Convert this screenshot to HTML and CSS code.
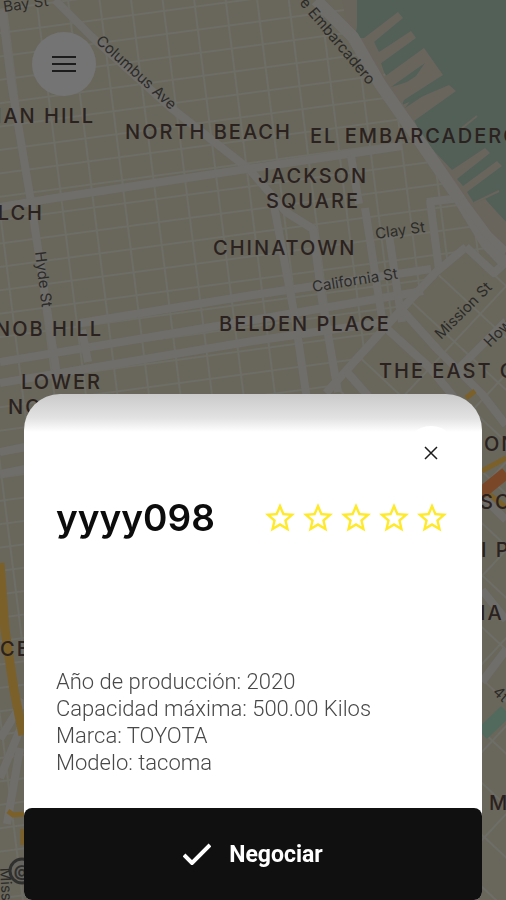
FILE: index.html
```html
<!DOCTYPE html>
<html lang="es">
<head>
<meta charset="utf-8">
<meta name="viewport" content="width=device-width, initial-scale=1">
<title>Negociar</title>
<link rel="stylesheet" href="styles.css">
</head>
<body>
<svg class="map" viewBox="0 0 506 900" preserveAspectRatio="xMidYMin slice" role="img" aria-label="San Francisco">
  <defs>
    <pattern id="blocks" width="31" height="23" patternUnits="userSpaceOnUse" patternTransform="matrix(1 -0.135 0.125 1 5 8)">
      <path d="M0 0H31M0 0V23" class="street"/>
    </pattern>
    <pattern id="soma" width="38" height="60" patternUnits="userSpaceOnUse" patternTransform="translate(435 273) rotate(-47)">
      <path d="M0 0H38M0 0V60" class="street street-wide"/>
    </pattern>
  </defs>
  <rect width="506" height="900" class="land"/>
  <rect width="506" height="900" fill="url(#blocks)"/>
  <path class="land" d="M466 247L326 393L200 530V900H506V266Z"/>
  <path fill="url(#soma)" d="M466 247L326 393L200 530V900H506V266Z"/>

  <!-- bay and piers -->
  <path class="water" d="M357 0V25L355 38L366 38L374 42L380 60L384 72L400 100L415 122L422 137L433 150L450 172L462 187L473 204L485 199L497 214L506 222V0Z"/>
  <path class="pier" d="M342 0H357V25L355 38L364 38L398 12L403 18L374 42L379 52L411 31L416 38L380 64L384 77L424 48L443 75L404 100L402 105L449 85L456 91L414 121L422 136L433 150L452 170L485 148L490 153L457 179L463 186L497 161L502 166L467 192L474 203L485 199L506 222V262L460 204L410 130L380 84L350 38Z"/>
  <path class="water" d="M391 87L425 63L416 76L407 82L401 84ZM411 100L426 94L405 108Z"/>
  <path class="pier-line" d="M462 128L477 116M474 203L499 191"/>

  <!-- avenues -->
  <g class="road">
    <path d="M2 10L12 88L31 202L58 382"/>
    <path d="M55 0L92 37L170 107L250 170L286 212L313 229L322 300L338 392"/>
    <path d="M0 207L55 198L240 170L402 146"/>
    <path d="M80 323L253 295L431 269"/>
    <path d="M0 362L253 320L423 291"/>
    <path d="M0 383L253 341L385 322"/>
    <path d="M0 452L30 446M0 474L30 468"/>
    <path d="M273 200L295 318L307 400"/>
    <path d="M365 208L382 318M389 235L402 322"/>
    <path d="M430 200L439 270M427 202L460 198"/>
    <path d="M351 156L359 204M82 330L88 362"/>
    <path d="M466 247L435 273L390 322L326 393"/>
    <path d="M385 327L430 368L453 396"/>
    <path d="M402 310L439 351L482 394L506 425"/>
    <path d="M466 247L494 273L506 262"/>
    <path d="M460 367L506 321M346 371L369 397"/>
    <path d="M482 590L506 620M482 682L506 650M476 490L506 520"/>
    <path d="M0 739L24 700M0 778L24 720M7 824L20 748"/>
  </g>
  <path class="road road-main" d="M316 0L353 37L380 84L410 127L460 200L486 243L506 264"/>
  <path class="road" d="M462 200L488 235L506 252"/>

  <path class="amber" d="M0 563L5 630L14 690L23 735"/>
  <path class="amber amber-thin" d="M8 811L13 815L24 814M23 829V845M466 398L475 391M482 471L506 458M482 489L506 507"/>
  <path class="freeway" d="M480 494L506 473"/>
  <path class="creek" d="M482 734L506 711"/>

  <g class="district">
    <text x="95" y="123" text-anchor="end">IAN HILL</text>
    <text x="125" y="139">NORTH BEACH</text>
    <text x="310" y="143">EL EMBARCADERO</text>
    <text x="313" y="183" text-anchor="middle">JACKSON</text>
    <text x="313" y="208" text-anchor="middle">SQUARE</text>
    <text x="44" y="220" text-anchor="end">LCH</text>
    <text x="213" y="255">CHINATOWN</text>
    <text x="103" y="336" text-anchor="end">NOB HILL</text>
    <text x="219" y="331">BELDEN PLACE</text>
    <text x="379" y="378">THE EAST C</text>
    <text x="21" y="389">LOWER</text>
    <text x="8" y="414">NO</text>
    <text x="0" y="656">CE</text>
    <text x="484" y="451">ON</text>
    <text x="480" y="509">SO</text>
    <text x="481" y="557">I P</text>
    <text x="480" y="620">IA</text>
    <text x="489" y="810">M</text>
  </g>
  <g class="street-name">
    <text transform="translate(4 12) rotate(-8)">Bay St</text>
    <text transform="translate(95 42) rotate(42)">Columbus Ave</text>
    <text transform="translate(299 3) rotate(50)">e Embarcadero</text>
    <text transform="translate(35 252) rotate(83)">Hyde St</text>
    <text transform="translate(376 239) rotate(-8)">Clay St</text>
    <text transform="translate(313 292) rotate(-9)">California St</text>
    <text transform="translate(441 340) rotate(-45)">Mission St</text>
    <text transform="translate(490 348) rotate(-45)">How</text>
    <text transform="translate(492 693) rotate(42)">4t</text>
    <text transform="translate(0 868) rotate(87)">Miss</text>
  </g>
  <circle cx="22" cy="871" r="12" class="poi"/>
  <text x="22" y="877" text-anchor="middle" class="poi-sign">@</text>
</svg>

<div class="screen">
  <header class="topbar">
    <button class="menu" type="button" aria-label="Menú">
      <svg viewBox="0 0 24 18" width="24" height="18"><path d="M0 2H24M0 9H24M0 16H24"/></svg>
    </button>
  </header>

  <main class="sheet">
    <div class="sheet-top">
      <button class="close" type="button" aria-label="Cerrar">
        <svg viewBox="0 0 14 14" width="14" height="14"><path d="M1 1L13 13M13 1L1 13"/></svg>
      </button>
    </div>
    <div class="driver">
      <h1 class="name">yyyy098</h1>
      <div class="stars" role="img" aria-label="0 de 5">
        <svg viewBox="0 0 24 24"><path id="star" d="M22 9.24l-7.19-.62L12 2 9.19 8.63 2 9.24l5.46 4.73L5.82 21 12 17.27 18.18 21l-1.63-7.03L22 9.24zM12 15.4l-3.76 2.27 1-4.28-3.32-2.88 4.38-.38L12 6.1l1.71 4.04 4.38.38-3.32 2.88 1 4.28L12 15.4z"/></svg>
        <svg viewBox="0 0 24 24"><use href="#star"/></svg>
        <svg viewBox="0 0 24 24"><use href="#star"/></svg>
        <svg viewBox="0 0 24 24"><use href="#star"/></svg>
        <svg viewBox="0 0 24 24"><use href="#star"/></svg>
      </div>
    </div>
    <ul class="details">
      <li>Año de producción: 2020</li>
      <li>Capacidad máxima: 500.00 Kilos</li>
      <li>Marca: TOYOTA</li>
      <li>Modelo: tacoma</li>
    </ul>
    <button class="negotiate" type="button">
      <svg viewBox="0 0 28 22" width="28" height="22"><path d="M1 12L9 20L27 2"/></svg>
      Negociar
    </button>
  </main>
</div>
</body>
</html>
```
FILE: styles.css
```css
* {
  box-sizing: border-box;
}

body {
  margin: 0;
  background: #69675b;
  font-family: Roboto, "Liberation Sans", sans-serif;
}

button {
  border: 0;
  padding: 0;
  font: inherit;
  cursor: pointer;
}

/* map */
.map {
  position: fixed;
  inset: 0;
  width: 100%;
  height: 100%;
}

.land { fill: #69675b; }
.water { fill: #526058; }
.pier { fill: #69655c; }

.street {
  fill: none;
  stroke: #6e6d66;
  stroke-width: 4;
}

.pier-line {
  fill: none;
  stroke: #69645c;
  stroke-width: 2;
}

.road {
  fill: none;
  stroke: #6f6e6b;
  stroke-width: 8;
  stroke-linejoin: round;
}

.road-main { stroke-width: 12; }

.amber {
  fill: none;
  stroke: #7b6029;
  stroke-width: 9;
}

.amber-thin { stroke-width: 5; }

.freeway {
  stroke: #7a4828;
  stroke-width: 12;
}

.creek {
  stroke: #526a5d;
  stroke-width: 14;
}

.district {
  fill: #2b2220;
  font: 500 20px Inter, sans-serif;
  letter-spacing: 2px;
}

.street-name {
  fill: #2c2b29;
  font: 400 15px Inter, sans-serif;
}

.poi {
  fill: #666560;
  stroke: #30302f;
  stroke-width: 3;
}

.poi-sign {
  fill: #30302f;
  font: 700 16px Inter, sans-serif;
}

/* screen */
.screen {
  position: relative;
  display: flex;
  flex-direction: column;
  justify-content: space-between;
  min-height: 100vh;
}

.topbar {
  padding: 32px;
}

.menu {
  display: grid;
  place-items: center;
  width: 64px;
  height: 64px;
  border-radius: 50%;
  background: #747474;
}

.menu path {
  stroke: #1c1c1c;
  stroke-width: 2;
}

.sheet {
  display: flex;
  flex-direction: column;
  margin: 0 24px;
  border-radius: 36px 36px 8px 8px;
  background: #fff linear-gradient(#cacaca, #e2e2e2 24px, #fff 38px) no-repeat;
}

.sheet-top {
  display: flex;
  justify-content: flex-end;
  padding: 32px 24px 0;
}

.close {
  display: grid;
  place-items: center;
  width: 54px;
  height: 54px;
  border-radius: 50%;
  background: #fff;
}

.close path {
  stroke: #1c1c1c;
  stroke-width: 1.5;
}

.driver {
  display: flex;
  align-items: center;
  justify-content: space-between;
  height: 56px;
  margin: 10px 32px 0;
}

.name {
  margin: 0;
  color: #0c0c0c;
  font: 600 37px/48px Inter, sans-serif;
}

.stars {
  display: flex;
  gap: 2px;
}

.stars svg {
  width: 36px;
  height: 36px;
  fill: #ffe92b;
}

.details {
  margin: 122px 32px 32px;
  padding: 0;
  list-style: none;
  color: #484848;
  font-weight: 300;
  font-size: 22px;
  line-height: 27px;
}

.negotiate {
  display: flex;
  align-items: center;
  justify-content: center;
  gap: 18px;
  height: 92px;
  border-radius: 8px;
  background: #101010;
  color: #fff;
  font-weight: 700;
  font-size: 23px;
}

.negotiate path {
  fill: none;
  stroke: #fff;
  stroke-width: 4;
}
```
